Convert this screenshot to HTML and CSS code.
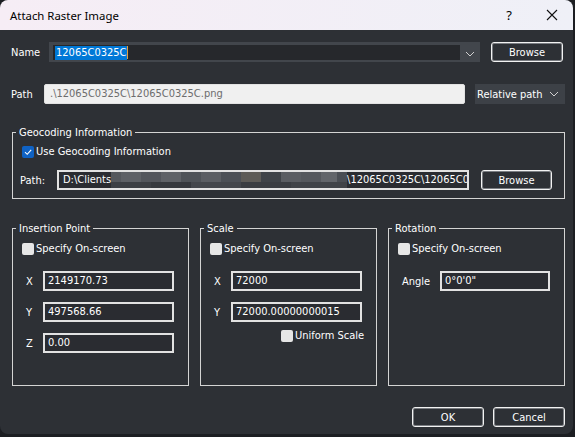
FILE: index.html
```html
<!DOCTYPE html>
<html>
<head>
<meta charset="utf-8">
<link rel="stylesheet" href="styles.css">
</head>
<body>
<div class="window">
  <div class="titlebar">
    <span class="title">Attach Raster Image</span>
    <span class="help">?</span>
    <svg class="close" width="12" height="12" viewBox="0 0 12 12"><path d="M1 1 L11 11 M11 1 L1 11" stroke="#111" stroke-width="1.1" fill="none"/></svg>
  </div>
  <div class="content">
    <div class="row row-name">
      <span class="lbl lbl-name">Name</span>
      <div class="combo">
        <div class="combo-edit"><span class="sel">12065C0325C</span><span class="caret"></span></div>
        <div class="combo-arrow"><svg width="10" height="6" viewBox="0 0 10 6"><path d="M1 1 L5 5 L9 1" stroke="#d0d0d0" stroke-width="1" fill="none"/></svg></div>
      </div>
      <button class="btn btn-browse">Browse</button>
    </div>
    <div class="row row-path">
      <span class="lbl lbl-path">Path</span>
      <div class="pathbox">.\12065C0325C\12065C0325C.png</div>
      <div class="relcombo"><span>Relative path</span><svg width="10" height="6" viewBox="0 0 10 6"><path d="M1 1 L5 5 L9 1" stroke="#d0d0d0" stroke-width="1" fill="none"/></svg></div>
    </div>
    <fieldset class="group geo">
      <legend>Geocoding Information</legend>
      <label class="check"><span class="box checked"><svg width="10" height="10" viewBox="0 0 10 10"><path d="M2 5.2 L4.2 7.3 L8.2 2.8" stroke="#fff" stroke-width="1.1" fill="none"/></svg></span>Use Geocoding Information</label>
      <div class="georow">
        <span class="lbl lbl-geopath">Path:</span>
        <div class="field geofield"><span class="seg">D:\Clients</span><span class="blur"></span><span class="seg">\12065C0325C\12065C0</span></div>
        <button class="btn btn-geo">Browse</button>
      </div>
    </fieldset>
    <div class="groups">
      <fieldset class="group small">
        <legend>Insertion Point</legend>
        <label class="check"><span class="box"></span>Specify On-screen</label>
        <div class="frow"><span class="axis">X</span><div class="field num">2149170.73</div></div>
        <div class="frow"><span class="axis">Y</span><div class="field num">497568.66</div></div>
        <div class="frow"><span class="axis">Z</span><div class="field num">0.00</div></div>
      </fieldset>
      <fieldset class="group small">
        <legend>Scale</legend>
        <label class="check"><span class="box"></span>Specify On-screen</label>
        <div class="frow"><span class="axis">X</span><div class="field num">72000</div></div>
        <div class="frow"><span class="axis">Y</span><div class="field num">72000.00000000015</div></div>
        <label class="check uniform"><span class="box"></span>Uniform Scale</label>
      </fieldset>
      <fieldset class="group small">
        <legend>Rotation</legend>
        <label class="check"><span class="box"></span>Specify On-screen</label>
        <div class="frow"><span class="axis angle">Angle</span><div class="field ang">0°0'0"</div></div>
      </fieldset>
    </div>
    <div class="actions">
      <button class="btn btn-act">OK</button>
      <button class="btn btn-act">Cancel</button>
    </div>
  </div>
</div>
</body>
</html>
```
FILE: styles.css
```css
* { box-sizing: border-box; }
html, body { margin: 0; padding: 0; }
body {
  width: 575px;
  height: 437px;
  background: #1c1e22;
  overflow: hidden;
  font-family: "DejaVu Sans Condensed", "DejaVu Sans", sans-serif;
  font-stretch: condensed;
  font-size: 11px;
  color: #ffffff;
}
.window {
  width: 573px;
  height: 434px;
  background: #2d3035;
  border-radius: 8px;
  overflow: hidden;
}
.titlebar {
  height: 30px;
  background: linear-gradient(to right, #f6edf5, #eff0f7);
  display: flex;
  align-items: center;
  font-family: "Noto Sans", "Open Sans", sans-serif;
  font-stretch: normal;
  font-size: 11.4px;
  color: #000;
}
.title { margin-left: 10px; flex: 1; }
.help { font-size: 13px; margin-right: 34px; }
.close { margin-right: 15px; }

.content { padding-top: 12px; }
.row { display: flex; align-items: center; height: 20px; }
.lbl-name { width: 49px; padding-left: 11px; }
.combo {
  width: 431px; height: 20px;
  background: #42464c;
  display: flex;
  padding: 3px 0 2px 4px;
}
.combo-edit {
  flex: 1;
  background: #26282c;
  display: flex; align-items: center;
  padding-left: 2px;
}
.sel { background: #0078d7; color: #fff; line-height: 14px; padding: 0 1px; }
.caret { width: 1px; height: 13px; background: #e0a040; }
.combo-arrow { width: 20px; display: flex; align-items: center; justify-content: center; padding-top: 2px; }
.btn {
  font: inherit;
  color: #fff;
  background: #2d3035;
  border: 1px solid #f2f2f2;
  box-shadow: inset 0 0 0 1px #7a7d82;
  border-radius: 3px;
  height: 20px;
  padding: 0;
}
.btn-browse { width: 72px; margin-left: 11px; }

.row-path { margin-top: 22px; }
.lbl-path { width: 44px; padding-left: 11px; }
.pathbox {
  width: 421px; height: 20px;
  background: #f0f0f0;
  border: 1px solid #e2e2e2;
  border-radius: 2px;
  color: #6d6d6d;
  padding-left: 5px;
  line-height: 18px;
}
.relcombo {
  margin-left: 10px;
  width: 90px; height: 20px;
  background: #3d4147;
  display: flex; align-items: center; justify-content: space-between;
  padding: 0 6px 0 2px;
}

.group {
  margin: 0;
  border: 1px solid #d4d4d4;
  padding: 0 0 0 3px;
  min-width: 0;
}
.group legend { padding: 0 3px; line-height: 13px; }
.geo { margin: 22px 0 0 12px; width: 553px; height: 73px; }
.check { display: flex; align-items: center; height: 13px; margin-left: 6px; }
.box {
  width: 12px; height: 12px;
  background: #e6e6e6;
  border-radius: 2px;
  margin-right: 2px;
  display: flex; align-items: center; justify-content: center;
}
.box.checked { background: #0f62c4; }
.geo .check { margin-top: 6px; }
.georow { display: flex; align-items: center; margin-top: 12px; }
.lbl-geopath { width: 41px; padding-left: 4px; }
.field {
  height: 20px;
  border: 2px solid #e2e2e2;
  background: #2a2c31;
  color: #fff;
  padding-left: 3px;
  line-height: 16px;
  white-space: nowrap;
  overflow: hidden;
  display: flex; align-items: center;
}
.seg { flex: none; }
.geofield { width: 412px; padding-left: 4px; }
.blur {
  flex: none;
  width: 236px; height: 16px;
  background:
    linear-gradient(to right, #55585d 0 10px, #5e6166 10px 30px, #53565c 30px 50px, #5f6267 50px 70px, #4f5358 70px 90px, #5b5e63 90px 110px, #4c5056 110px 130px, #5d5b57 130px 150px, #3f4348 150px 170px, #5a5d62 170px 190px, #55585d 190px 210px, #62656a 210px 226px, #4a4e54 226px 236px) top / 100% 10px no-repeat,
    linear-gradient(to right, #3c3f44 0 40px, #36393e 40px 80px, #44474c 80px 130px, #3a3d42 130px 180px, #404348 180px 236px) bottom / 100% 6px no-repeat;
}
.btn-geo { width: 71px; margin-left: 12px; }

.groups { display: flex; gap: 11px; margin: 23px 0 0 12px; }
.small { width: 177px; height: 164px; }
.small .check { margin-top: 7px; }
.frow { display: flex; align-items: center; margin-top: 11px; }
.small .check + .frow { margin-top: 16px; }
.axis { width: 27px; padding-left: 10px; }
.axis.angle { width: 48px; }
.num { width: 131px; }
.ang { width: 110px; }
.uniform { margin-left: 77px; margin-top: 11px; }

.actions { display: flex; gap: 9px; margin: 21px 0 0 412px; }
.btn-act { width: 72px; }
```
